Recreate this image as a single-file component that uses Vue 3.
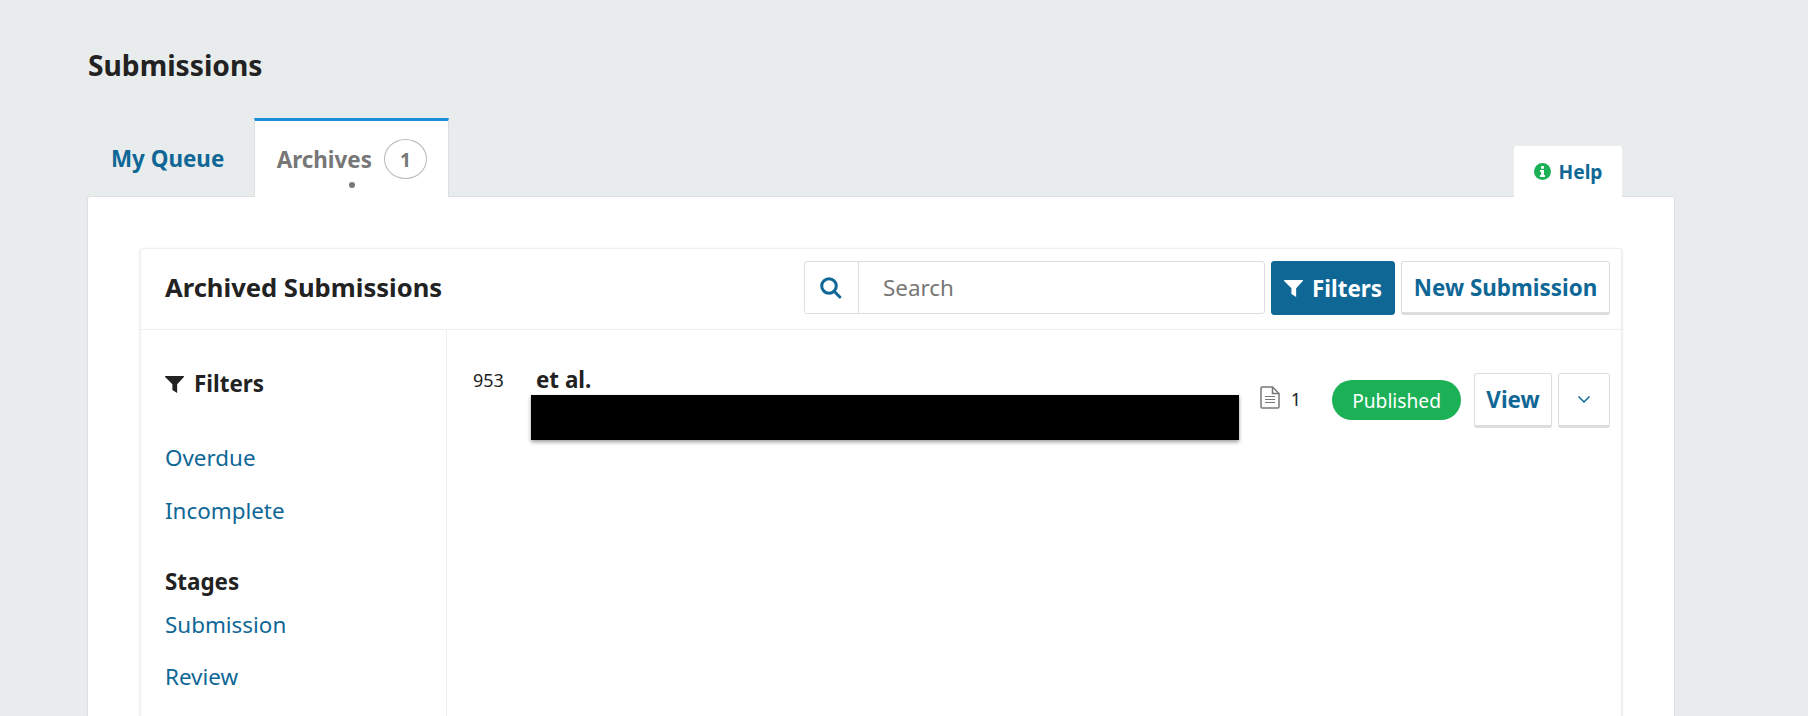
<template>
  <div class="page">
    <h1 class="title">Submissions</h1>
    <div class="tabbar">
      <a class="tab"><span class="queue">My Queue</span></a>
      <a class="tab active">
        <span>Archives</span><span class="count">1</span><i class="dot"></i>
      </a>
      <a class="help">
        <svg class="help-ic" viewBox="0 0 16 16"><circle cx="8" cy="8" r="8" fill="#1cb157"/><rect x="6.600" y="2.800" width="2.800" height="2.500" rx=".4" fill="#fff"/><path d="M5.600 6.500h3.800v4.800h1v1.800H5.600v-1.800h1V8.300h-1z" fill="#fff"/></svg>
        Help
      </a>
    </div>
    <div class="card">
      <section class="panel">
        <header class="phead">
          <h2>Archived Submissions</h2>
          <div class="tools">
            <div class="search">
              <span class="sicon">
                <svg width="23" height="23" viewBox="0 0 23 23" fill="none" stroke="#0f6796" stroke-width="3"><circle cx="10" cy="10" r="7.300"/><path d="M15.200 15.200l5.600 5.800" stroke-linecap="round"/></svg>
              </span>
              <span class="placeholder">Search</span>
            </div>
            <button class="btn primary">
              <svg class="funnel" viewBox="0 0 18 18"><path d="M0.500 1h17a.5.5 0 0 1 .4.8L11.500 8.800V17l-4.500-2.800V8.800L.1 1.800A.5.5 0 0 1 .5 1z" fill="#fff"/></svg>
              Filters
            </button>
            <button class="btn new">New Submission</button>
          </div>
        </header>
        <div class="pbody">
          <aside class="side">
            <div class="side-title">
              <svg class="funnel" viewBox="0 0 18 18"><path d="M0.500 1h17a.5.5 0 0 1 .4.8L11.500 8.800V17l-4.500-2.800V8.800L.1 1.800A.5.5 0 0 1 .5 1z" fill="#222"/></svg>
              Filters
            </div>
            <a class="flt first">Overdue</a>
            <a class="flt second">Incomplete</a>
            <div class="side-sub">Stages</div>
            <a class="flt third">Submission</a>
            <a class="flt fourth">Review</a>
          </aside>
          <div class="list">
            <div class="row">
              <span class="id">953</span>
              <div class="info">
                <div class="author">et al.</div>
                <div class="redact"></div>
              </div>
              <svg class="doc" width="20" height="23" viewBox="0 0 20 23" fill="none" stroke="#777" stroke-width="1.500"><path d="M1 2.200a1.200 1.200 0 0 1 1.200-1.200H12.500L19 7.500v13.300a1.200 1.200 0 0 1-1.200 1.200H2.200A1.200 1.200 0 0 1 1 20.800z"/><path d="M12.500 1v6.500H19"/><path d="M5 10.500h10M5 13.500h10M5 16.500h10" stroke-width="1.200"/></svg>
              <span class="num">1</span>
              <span class="badge">Published</span>
              <button class="btn view">View</button>
              <button class="btn caret">
                <svg width="14" height="9" viewBox="0 0 14 9" fill="none" stroke="#0f6796" stroke-width="1.500"><path d="M1.500 1.500L7 7l5.500-5.500"/></svg>
              </button>
            </div>
          </div>
        </div>
      </section>
    </div>
  </div>
</template>

<script setup>
</script>

<style>
html, body { margin: 0; background: #e9ecec; }
</style>

<style scoped>
.page {
  box-sizing: border-box;
  width: 1808px;
  height: 716px;
  overflow: hidden;
  padding: 0 133px 0 87px;
  background: #e9ecec;
  font-family: "Noto Sans", sans-serif;
  color: #222;
}
.title {
  margin: 0;
  padding: 46px 0 0 1px;
  font-size: 28.2px;
  line-height: 38px;
  font-weight: 700;
  height: 72px;
  box-sizing: content-box;
}
.tabbar {
  position: relative;
  z-index: 1;
  display: flex;
  height: 79px;
  margin-bottom: -1px;
  align-items: stretch;
}
.tab {
  display: flex;
  align-items: center;
  padding: 0 30px 0 24px;
  font-size: 22.4px;
  font-weight: 700;
  color: #0f6796;
  box-sizing: border-box;
}
.queue { position: relative; top: 1px; }
.tab.active {
  position: relative;
  width: 195px;
  padding: 0;
  justify-content: center;
  gap: 12px;
  color: #777;
  background: #fff;
  border-top: 3px solid #1a8ed6;
  border-left: 1px solid #dcdfe1;
  border-right: 1px solid #dcdfe1;
}
.count {
  display: flex;
  align-items: center;
  justify-content: center;
  width: 43px;
  height: 40px;
  box-sizing: border-box;
  border: 1px solid #b8b8b8;
  border-radius: 50%;
  font-size: 19.2px;
}
.dot {
  position: absolute;
  left: 50%;
  bottom: 9px;
  width: 6px;
  height: 6px;
  margin-left: -3px;
  border-radius: 50%;
  background: #777;
}
.help {
  margin-left: auto;
  margin-right: 53px;
  margin-top: 28px;
  width: 108px;
  display: flex;
  align-items: center;
  justify-content: center;
  gap: 8px;
  background: #fff;
  color: #0f6796;
  font-size: 19.2px;
  font-weight: 700;
  border-radius: 3px 3px 0 0;
}
.help-ic { width: 17px; height: 17px; }
.card {
  box-sizing: border-box;
  background: #fff;
  border: 1px solid #dcdfe1;
  border-radius: 3px;
  padding: 51px 52px 0 52px;
  height: 600px;
}
.panel {
  border: 1px solid #eeeeee;
  border-radius: 3px;
  box-shadow: 0 1px 3px rgba(0,0,0,.12);
  height: 500px;
}
.phead {
  display: flex;
  align-items: center;
  justify-content: space-between;
  height: 81px;
  padding: 0 11px 0 24px;
  border-bottom: 1px solid #eee;
  box-sizing: border-box;
}
.phead h2 {
  margin: -4px 0 0;
  font-size: 25.6px;
  font-weight: 700;
}
.tools { display: flex; gap: 6px; align-items: flex-start; margin-top: -2px; }
.search {
  display: flex;
  width: 461px;
  height: 53px;
  box-sizing: border-box;
  border: 1px solid #ddd;
  border-radius: 3px;
}
.sicon {
  width: 54px;
  box-sizing: border-box;
  padding-right: 3px;
  display: flex;
  align-items: center;
  justify-content: center;
  border-right: 1px solid #ddd;
}
.placeholder {
  padding-left: 24px;
  line-height: 52px;
  font-size: 22.4px;
  color: #777;
}
.btn {
  box-sizing: border-box;
  height: 54px;
  display: inline-flex;
  align-items: center;
  justify-content: center;
  gap: 9px;
  padding: 0;
  background: #fff;
  border: 1px solid #ddd;
  border-bottom: 3px solid #ddd;
  border-radius: 3px;
  color: #0f6796;
  font-family: inherit;
  font-size: 22.4px;
  font-weight: 700;
}
.tools .btn.new { width: 209px; }
.tools .btn.primary {
  width: 124px;
  background: #0f6796;
  border-color: #0f6796;
  border-bottom: 1px solid #0f6796;
  color: #fff;
}
.funnel { width: 19px; height: 19px; }
.pbody { display: flex; height: 420px; }
.side {
  box-sizing: border-box;
  width: 306px;
  border-right: 1px solid #eee;
  padding: 38px 0 0 24px;
  display: flex;
  flex-direction: column;
  align-items: flex-start;
}
.side-title {
  display: flex;
  align-items: center;
  gap: 10px;
  font-size: 22.4px;
  line-height: 32px;
  font-weight: 700;
}
.flt {
  font-size: 22.4px;
  line-height: 30px;
  color: #0f6796;
}
.flt.first { margin-top: 43px; }
.flt.second { margin-top: 23px; }
.flt.third { margin-top: 13px; }
.flt.fourth { margin-top: 22px; }
.side-sub {
  margin-top: 41px;
  font-size: 22.4px;
  line-height: 30px;
  font-weight: 700;
}
.list { flex: 1; min-width: 0; }
.row {
  display: flex;
  align-items: flex-start;
  padding: 42px 11px 0 25px;
}
.id {
  width: 58px;
  margin-left: 1px;
  font-size: 18px;
  line-height: 30px;
  margin-top: -7px;
}
.info { width: 708px; }
.author {
  padding-left: 5px;
  font-size: 22.4px;
  font-weight: 700;
  line-height: 30px;
  margin-top: -7px;
}
.redact {
  height: 45px;
  background: #000;
  box-shadow: 0 2px 4px rgba(0,0,0,.4);
}
.doc { margin: 14px 0 0 21px; }
.num { margin: 14px 0 0 11px; font-size: 18px; line-height: 26px; }
.badge {
  margin: 8px 0 0 31px;
  width: 129px;
  height: 40px;
  border-radius: 20px;
  background: #1cb157;
  color: #fff;
  font-size: 19.2px;
  line-height: 42px;
  text-align: center;
}
.view { width: 78px; height: 55px; margin: 1px 0 0 13px; }
.caret { width: 52px; height: 55px; margin: 1px 0 0 6px; }
</style>
